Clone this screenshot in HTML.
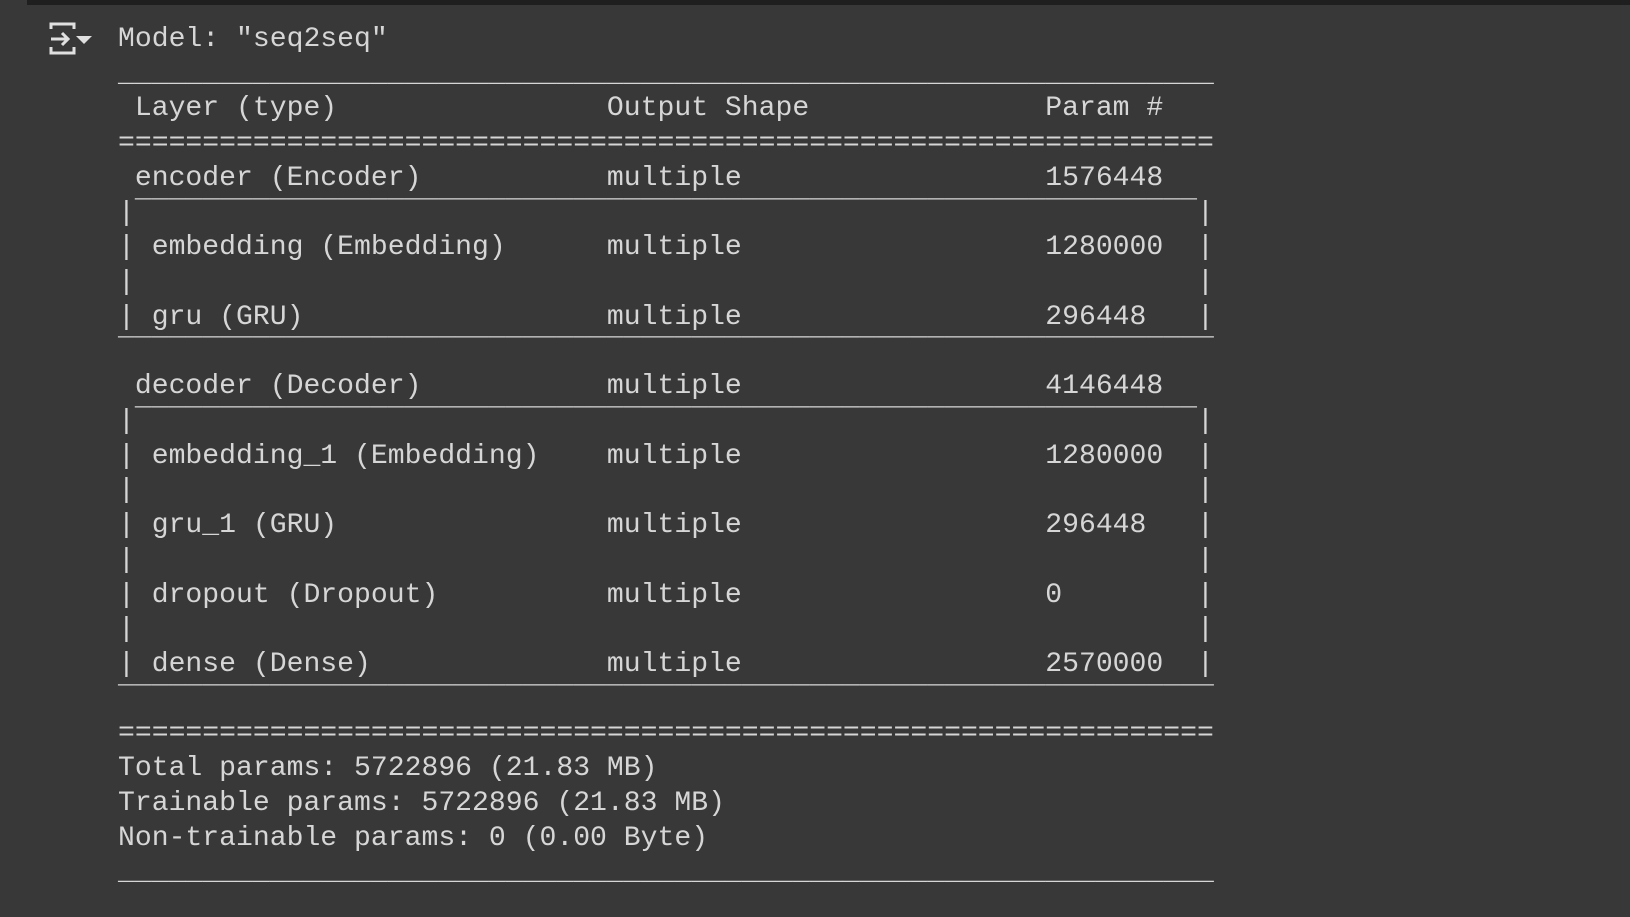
<!DOCTYPE html>
<html><head><style>
html,body{margin:0;padding:0;}
body{width:1630px;height:917px;background:#383838;position:relative;overflow:hidden;}
.top{position:absolute;left:27px;top:0;width:1603px;height:5px;background:#1f1f1f;}
pre{position:absolute;left:118px;top:23px;margin:0;font-family:"Liberation Mono",monospace;font-size:28.1px;line-height:34.72px;color:#d6d6d6;}
svg{position:absolute;left:0;top:0;}
</style></head><body>
<div class="top"></div>
<svg width="100" height="60">
<path d="M51 29 V24 H74 V29 M51 47 V53 H74 V47" stroke="#e0e0e0" stroke-width="3" fill="none"/>
<path d="M51 39 H68 M62 33 L68 39 L62 45" stroke="#e0e0e0" stroke-width="3" fill="none"/>
<path d="M76 36 H92 L84 44 Z" fill="#e0e0e0"/>
</svg>
<pre>Model: "seq2seq"
_________________________________________________________________
 Layer (type)                Output Shape              Param #   
=================================================================
 encoder (Encoder)           multiple                  1576448   
|¯¯¯¯¯¯¯¯¯¯¯¯¯¯¯¯¯¯¯¯¯¯¯¯¯¯¯¯¯¯¯¯¯¯¯¯¯¯¯¯¯¯¯¯¯¯¯¯¯¯¯¯¯¯¯¯¯¯¯¯¯¯¯|
| embedding (Embedding)      multiple                  1280000  |
|                                                               |
| gru (GRU)                  multiple                  296448   |
¯¯¯¯¯¯¯¯¯¯¯¯¯¯¯¯¯¯¯¯¯¯¯¯¯¯¯¯¯¯¯¯¯¯¯¯¯¯¯¯¯¯¯¯¯¯¯¯¯¯¯¯¯¯¯¯¯¯¯¯¯¯¯¯¯
 decoder (Decoder)           multiple                  4146448   
|¯¯¯¯¯¯¯¯¯¯¯¯¯¯¯¯¯¯¯¯¯¯¯¯¯¯¯¯¯¯¯¯¯¯¯¯¯¯¯¯¯¯¯¯¯¯¯¯¯¯¯¯¯¯¯¯¯¯¯¯¯¯¯|
| embedding_1 (Embedding)    multiple                  1280000  |
|                                                               |
| gru_1 (GRU)                multiple                  296448   |
|                                                               |
| dropout (Dropout)          multiple                  0        |
|                                                               |
| dense (Dense)              multiple                  2570000  |
¯¯¯¯¯¯¯¯¯¯¯¯¯¯¯¯¯¯¯¯¯¯¯¯¯¯¯¯¯¯¯¯¯¯¯¯¯¯¯¯¯¯¯¯¯¯¯¯¯¯¯¯¯¯¯¯¯¯¯¯¯¯¯¯¯
=================================================================
Total params: 5722896 (21.83 MB)
Trainable params: 5722896 (21.83 MB)
Non-trainable params: 0 (0.00 Byte)
_________________________________________________________________
</pre>
</body></html>
